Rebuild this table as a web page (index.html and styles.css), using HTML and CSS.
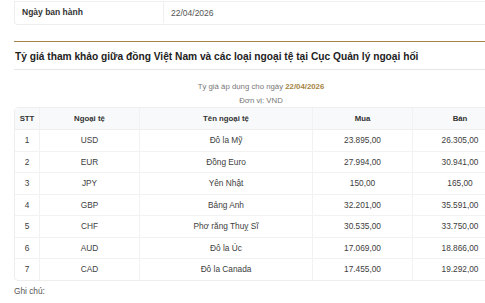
FILE: index.html
```html
<!DOCTYPE html>
<html lang="vi">
<head>
<meta charset="utf-8">
<link rel="stylesheet" href="styles.css">
</head>
<body>
<div class="page">
  <div class="info">
    <div class="info-row">
      <div class="info-label">Ngày ban hành</div>
      <div class="info-value">22/04/2026</div>
    </div>
  </div>

  <section class="rates">
    <h2 class="rates-title">Tỷ giá tham khảo giữa đồng Việt Nam và các loại ngoại tệ tại Cục Quản lý ngoại hối</h2>
    <p class="rates-date">Tỷ giá áp dụng cho ngày <strong>22/04/2026</strong></p>
    <p class="rates-unit">Đơn vị: VND</p>
    <table class="rates-table">
      <thead>
        <tr><th class="c-stt">STT</th><th class="c-code">Ngoại tệ</th><th class="c-name">Tên ngoại tệ</th><th class="c-buy">Mua</th><th class="c-sell">Bán</th></tr>
      </thead>
      <tbody>
        <tr><td>1</td><td>USD</td><td>Đô la Mỹ</td><td>23.895,00</td><td>26.305,00</td></tr>
        <tr><td>2</td><td>EUR</td><td>Đồng Euro</td><td>27.994,00</td><td>30.941,00</td></tr>
        <tr><td>3</td><td>JPY</td><td>Yên Nhật</td><td>150,00</td><td>165,00</td></tr>
        <tr><td>4</td><td>GBP</td><td>Bảng Anh</td><td>32.201,00</td><td>35.591,00</td></tr>
        <tr><td>5</td><td>CHF</td><td>Phơ răng Thuỵ Sĩ</td><td>30.535,00</td><td>33.750,00</td></tr>
        <tr><td>6</td><td>AUD</td><td>Đô la Úc</td><td>17.069,00</td><td>18.866,00</td></tr>
        <tr><td>7</td><td>CAD</td><td>Đô la Canada</td><td>17.455,00</td><td>19.292,00</td></tr>
      </tbody>
    </table>
    <p class="rates-note">Ghi chú:</p>
  </section>
</div>
</body>
</html>
```

FILE: styles.css
```css
html, body {
  margin: 0;
  padding: 0;
  background: #fff;
}
body {
  font-family: "Liberation Sans", Arial, sans-serif;
  color: #444;
  overflow: hidden;
}
.page {
  width: 494px;
  padding-left: 14px;
}
.info {
  border: 1px solid #eeeeee;
  border-top: none;
  border-radius: 0 0 4px 4px;
  height: 23px;
}
.info-row {
  display: flex;
  margin-top: 1px;
  border-top: 1px solid #f0f0f0;
  height: 21px;
  align-items: center;
  font-size: 8.5px;
}
.info-label {
  width: 141px;
  padding-left: 7px;
  font-weight: bold;
  color: #333;
  height: 21px;
  line-height: 21px;
  border-right: 1px solid #f0f0f0;
}
.info-value {
  padding-left: 7px;
  color: #555;
}
.rates {
  margin-top: 16px;
  border-top: 1px solid #a5834c;
}
.rates-title {
  margin: 0;
  font-size: 10.2px;
  font-weight: bold;
  color: #222;
  padding: 8px 1px 0;
  height: 19px;
  line-height: 13px;
  border-bottom: 1px solid #e6e6e6;
}
.rates-date {
  margin: 0;
  margin-top: 11px;
  text-align: center;
  font-size: 7.8px;
  line-height: 11px;
  color: #777;
}
.rates-date strong {
  color: #a5833f;
}
.rates-unit {
  margin: 0;
  margin-top: 3px;
  text-align: center;
  font-size: 7.8px;
  line-height: 11px;
  color: #777;
}
.rates-table {
  margin-top: 1px;
  width: 494px;
  border-collapse: separate;
  border-spacing: 0;
  border: 1px solid #eeeeee;
  border-radius: 4px;
  font-size: 8.3px;
  table-layout: fixed;
}
.rates-table th,
.rates-table td {
  text-align: center;
  padding: 0;
  border-right: 1px solid #f2f2f2;
  border-bottom: 1px solid #f2f2f2;
}
.rates-table th:last-child,
.rates-table td:last-child {
  border-right: none;
}
.rates-table tbody tr:last-child td {
  border-bottom: none;
}
.rates-table th {
  height: 21px;
  background: #f8f9fa;
  font-weight: bold;
  font-size: 7.8px;
  color: #333;
  border-bottom: 1px solid #eeeeee;
}
.rates-table td {
  height: 20.5px;
  color: #3d3d3d;
}
.c-stt { width: 24px; }
.c-code { width: 99px; }
.c-name { width: 172px; }
.c-buy { width: 99px; }
.rates-note {
  margin: 4px 0 0;
  font-size: 8.3px;
  line-height: 12px;
  color: #555;
}
```
